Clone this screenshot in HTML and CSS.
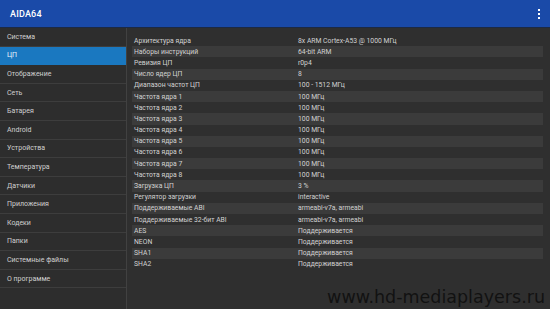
FILE: index.html
```html
<!DOCTYPE html>
<html lang="ru">
<head>
    <meta charset="UTF-8">
    <meta name="viewport" content="width=device-width, initial-scale=1.0">
    <title>AIDA64</title>
    <link rel="stylesheet" href="styles.css">
</head>
<body>
    <header class="app-bar">
        <span class="app-title">AIDA64</span>
        <svg class="menu-icon" width="4" height="10" viewBox="0 0 4 10">
            <rect x="1" y="0" width="2" height="2" fill="#fff"/>
            <rect x="1" y="4" width="2" height="2" fill="#fff"/>
            <rect x="1" y="8" width="2" height="2" fill="#fff"/>
        </svg>
    </header>

    <div class="main">
        <nav class="sidebar">
            <div class="nav-item">Система</div>
            <div class="nav-item active">ЦП</div>
            <div class="nav-item">Отображение</div>
            <div class="nav-item">Сеть</div>
            <div class="nav-item">Батарея</div>
            <div class="nav-item">Android</div>
            <div class="nav-item">Устройства</div>
            <div class="nav-item">Температура</div>
            <div class="nav-item">Датчики</div>
            <div class="nav-item">Приложения</div>
            <div class="nav-item">Кодеки</div>
            <div class="nav-item">Папки</div>
            <div class="nav-item">Системные файлы</div>
            <div class="nav-item">О программе</div>
        </nav>

        <section class="content">
            <div class="row"><span class="label">Архитектура ядра</span><span class="value">8x ARM Cortex-A53 @ 1000 МГц</span></div>
            <div class="row"><span class="label">Наборы инструкций</span><span class="value">64-bit ARM</span></div>
            <div class="row"><span class="label">Ревизия ЦП</span><span class="value">r0p4</span></div>
            <div class="row"><span class="label">Число ядер ЦП</span><span class="value">8</span></div>
            <div class="row"><span class="label">Диапазон частот ЦП</span><span class="value">100 - 1512 МГц</span></div>
            <div class="row"><span class="label">Частота ядра 1</span><span class="value">100 МГц</span></div>
            <div class="row"><span class="label">Частота ядра 2</span><span class="value">100 МГц</span></div>
            <div class="row"><span class="label">Частота ядра 3</span><span class="value">100 МГц</span></div>
            <div class="row"><span class="label">Частота ядра 4</span><span class="value">100 МГц</span></div>
            <div class="row"><span class="label">Частота ядра 5</span><span class="value">100 МГц</span></div>
            <div class="row"><span class="label">Частота ядра 6</span><span class="value">100 МГц</span></div>
            <div class="row"><span class="label">Частота ядра 7</span><span class="value">100 МГц</span></div>
            <div class="row"><span class="label">Частота ядра 8</span><span class="value">100 МГц</span></div>
            <div class="row"><span class="label">Загрузка ЦП</span><span class="value">3 %</span></div>
            <div class="row"><span class="label">Регулятор загрузки</span><span class="value">interactive</span></div>
            <div class="row"><span class="label">Поддерживаемые ABI</span><span class="value">armeabi-v7a, armeabi</span></div>
            <div class="row"><span class="label">Поддерживаемые 32-бит ABI</span><span class="value">armeabi-v7a, armeabi</span></div>
            <div class="row"><span class="label">AES</span><span class="value">Поддерживается</span></div>
            <div class="row"><span class="label">NEON</span><span class="value">Поддерживается</span></div>
            <div class="row"><span class="label">SHA1</span><span class="value">Поддерживается</span></div>
            <div class="row"><span class="label">SHA2</span><span class="value">Поддерживается</span></div>

            <div class="watermark">www.hd-mediaplayers.ru</div>
        </section>
    </div>
</body>
</html>
```

FILE: styles.css
```css
body { margin: 0; width: 550px; height: 309px; overflow: hidden; background: #2f2f2f; font-family: Roboto, "Liberation Sans", sans-serif; color: #d8d8d8; }
.app-bar { height: 28px; background: #1a4aa8; border-bottom: 1px solid #1c2a44; box-sizing: border-box; display: flex; align-items: center; justify-content: space-between; padding: 0 10px 0 10px; }
.app-title { color: #fff; font-size: 9px; font-weight: 500; letter-spacing: 0.2px; }
.menu-icon { margin-right: -1px; }
.main { display: flex; height: 281px; }
.sidebar { width: 126px; flex: none; background: #2d2d2d; border-right: 1px solid #414141; }
.nav-item { height: 18.6px; box-sizing: border-box; border-bottom: 1px solid #3d3d3d; padding-left: 7px; display: flex; align-items: center; font-size: 7px; color: #cfcfcf; }
.nav-item.active { background: #1a78c0; color: #e8f2fb; border-bottom-color: #1a78c0; }
.content { flex: 1; padding: 7px 7px 0 5px; position: relative; }
.row { height: 11.2px; display: flex; align-items: center; font-size: 6.8px; color: #d2d2d2; padding-left: 2px; }
.row:nth-child(even) { background: #3b3b3b; }
.label { width: 164px; flex: none; }
.watermark { position: absolute; right: 5px; bottom: 2px; font-family: "DejaVu Sans", sans-serif; font-size: 17.5px; color: #121212; }
```
